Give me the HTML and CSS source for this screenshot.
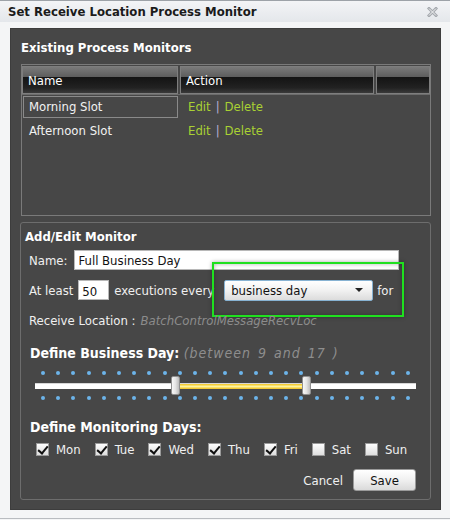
FILE: index.html
```html
<!DOCTYPE html>
<html lang="en">
<head>
  <meta charset="UTF-8">
  <title>Set Receive Location Process Monitor</title>
  <link rel="stylesheet" href="styles.css">
</head>
<body>
  <div class="window">
    <div class="titlebar">
      <span class="title">Set Receive Location Process Monitor</span>
      <svg class="close" width="11" height="10" viewBox="0 0 11 10">
        <path d="M2 1.5 L9 8.5 M9 1.5 L2 8.5" stroke="#a4a8ad" stroke-width="3" stroke-linecap="square"/>
        <path d="M2 1.5 L9 8.5 M9 1.5 L2 8.5" stroke="#f4f5f6" stroke-width="1"/>
      </svg>
    </div>

    <div class="panel">
      <h2 class="section-title">Existing Process Monitors</h2>

      <div class="grid">
        <div class="grid-head">
          <div class="hcell col-name">Name</div>
          <div class="hcell col-action">Action</div>
          <div class="hcell col-fill"></div>
        </div>
        <div class="grid-row selected">
          <div class="cell col-name">Morning Slot</div>
          <div class="cell col-action"><a class="link">Edit</a><span class="sep">|</span><a class="link">Delete</a></div>
        </div>
        <div class="grid-row">
          <div class="cell col-name">Afternoon Slot</div>
          <div class="cell col-action"><a class="link">Edit</a><span class="sep">|</span><a class="link">Delete</a></div>
        </div>
      </div>

      <div class="editor">
        <h3 class="editor-title">Add/Edit Monitor</h3>

        <div class="row">
          <label class="lbl">Name:</label>
          <div class="textbox name-box">Full Business Day</div>
        </div>

        <div class="row">
          <span class="lbl">At least</span>
          <div class="textbox count-box">50</div>
          <span class="lbl">executions every</span>
          <div class="combo">
            <span>business day</span>
            <span class="caret"></span>
          </div>
          <span class="lbl">for</span>
          <div class="focus-ring"></div>
        </div>

        <div class="row">
          <span class="lbl">Receive Location :</span>
          <span class="muted">BatchControlMessageRecvLoc</span>
        </div>

        <h3 class="block-title business">Define Business Day: <span class="hint">(between 9 and 17 )</span></h3>

        <div class="slider">
          <div class="ticks">
            <i></i><i></i><i></i><i></i><i></i><i></i><i></i><i></i><i></i><i></i><i></i><i></i><i></i>
            <i></i><i></i><i></i><i></i><i></i><i></i><i></i><i></i><i></i><i></i><i></i><i></i>
          </div>
          <div class="track">
            <div class="range"></div>
            <div class="thumb thumb-low"></div>
            <div class="thumb thumb-high"></div>
          </div>
          <div class="ticks">
            <i></i><i></i><i></i><i></i><i></i><i></i><i></i><i></i><i></i><i></i><i></i><i></i><i></i>
            <i></i><i></i><i></i><i></i><i></i><i></i><i></i><i></i><i></i><i></i><i></i><i></i>
          </div>
        </div>

        <h3 class="block-title monitoring">Define Monitoring Days:</h3>

        <div class="days">
          <label class="day"><span class="check on"></span>Mon</label>
          <label class="day"><span class="check on"></span>Tue</label>
          <label class="day"><span class="check on"></span>Wed</label>
          <label class="day"><span class="check on"></span>Thu</label>
          <label class="day"><span class="check on"></span>Fri</label>
          <label class="day"><span class="check"></span>Sat</label>
          <label class="day"><span class="check"></span>Sun</label>
        </div>

        <div class="actions">
          <a class="cancel">Cancel</a>
          <button type="button" class="save">Save</button>
        </div>
      </div>
    </div>
  </div>
</body>
</html>
```

FILE: styles.css
```css
* {
  box-sizing: border-box;
}

body {
  margin: 0;
  background: #f4f5f6;
  font-family: "DejaVu Sans", sans-serif;
  font-stretch: condensed;
  font-size: 13px;
  color: #f2f2f2;
}

.window {
  width: 450px;
  height: 519px;
  border-top: 1px solid #9da2a8;
  border-bottom: 1px solid #b9bcc0;
  background: #f4f5f6;
}

.titlebar {
  height: 21px;
  display: flex;
  align-items: center;
  justify-content: space-between;
  padding: 0 12px 0 8px;
  background: linear-gradient(to bottom, #f3f4f6, #e4e7eb);
}

.title {
  font-weight: bold;
  font-size: 13px;
  color: #1b1b1b;
}

.close {
  display: block;
}

/* dark content area */
.panel {
  margin: 6px 9px 0 10px;
  height: 482px;
  padding: 11px 9px 0 10px;
  background: #474747;
  border: 1px solid #3d3d3d;
}

.section-title {
  margin: 0 0 8px 0;
  font-size: 13px;
  line-height: 16px;
  font-weight: bold;
  color: #fff;
}

/* grid of existing monitors */
.grid {
  height: 152px;
  border: 1px solid #7a7a7a;
}

.grid-head {
  display: flex;
  gap: 2px;
  padding: 1px 0 0 0;
  border-bottom: 1px solid #6c6c6c;
}

.hcell {
  height: 28px;
  padding: 7px 0 0 5px;
  border: 1px solid #7e7e7e;
  background: linear-gradient(to bottom, #7a7a7a 0%, #5d5d5d 38%, #141414 40%, #222 80%, #3a3a3a 100%);
  color: #fff;
  font-size: 13px;
  line-height: 14px;
}

.col-name {
  width: 156px;
}

.col-action {
  width: 194px;
}

.col-fill {
  flex: 1;
}

.grid-row {
  display: flex;
  gap: 2px;
  margin-top: 1px;
}

.cell {
  height: 22px;
  line-height: 20px;
  padding-left: 5px;
  border: 1px solid transparent;
}

.grid-row .col-name {
  margin-left: 1px;
  width: 155px;
}

.grid-row.selected .col-name {
  border-color: #8a8a8a;
}

.grid-row + .grid-row {
  margin-top: 2px;
}

.col-action.cell {
  padding-left: 7px;
}

.link {
  color: #a9d133;
}

.sep {
  color: #b8b0d6;
  margin: 0 5px;
}

/* add / edit group box */
.editor {
  margin: 6px 0 0 -1px;
  height: 278px;
  padding: 6px 14px 0 4px;
  border: 1px solid #6d6d6d;
  border-radius: 3px;
}

.editor-title {
  margin: 0 0 5px 0;
  font-size: 13px;
  line-height: 16px;
  font-weight: bold;
  color: #fff;
}

.row {
  position: relative;
  display: flex;
  align-items: center;
  gap: 5px;
  height: 20px;
  margin: 0 0 10px 4px;
}

.lbl {
  color: #f0f0f0;
}

.textbox {
  height: 20px;
  background: #fff;
  border: 1px solid #b8b8b8;
  color: #111;
  padding: 2px 0 0 3px;
  line-height: 16px;
  overflow: hidden;
}

.name-box {
  width: 325px;
  padding-top: 2px;
  margin-left: 2px;
}

.count-box {
  width: 31px;
  padding-top: 3px;
}

.combo {
  display: flex;
  align-items: center;
  justify-content: space-between;
  width: 149px;
  height: 21px;
  margin: 0 -1px 0 5px;
  padding: 0 9px 0 6px;
  border: 1px solid #87b2d2;
  border-radius: 2px;
  background: linear-gradient(to bottom, #ffffff, #f1f1f1 50%, #dcdcdc);
  color: #111;
}

.caret {
  width: 0;
  height: 0;
  border-left: 4px solid transparent;
  border-right: 4px solid transparent;
  border-top: 4px solid #222;
}

.focus-ring {
  position: absolute;
  left: 183px;
  top: -18px;
  width: 192px;
  height: 55px;
  border: 2px solid #1fe01f;
  box-shadow: 0 0 4px rgba(0, 0, 0, 0.35), inset 0 0 4px rgba(0, 0, 0, 0.3);
  pointer-events: none;
}

.muted {
  color: #8c8c8c;
  font-style: italic;
}

.block-title {
  margin: 0 0 0 5px;
  font-size: 14px;
  line-height: 16px;
  font-weight: bold;
  color: #fff;
}

.business {
  margin-top: 15px;
}

.monitoring {
  margin-top: 19px;
}

.hint {
  font-weight: normal;
  font-style: italic;
  color: #8e8e8e;
  letter-spacing: 1px;
  word-spacing: 2px;
}

/* business-day range slider */
.slider {
  width: 381px;
  margin: 10px 0 0 10px;
}

.ticks {
  display: flex;
  justify-content: space-between;
  padding: 0 6px;
}

.ticks i {
  width: 4px;
  height: 4px;
  border-radius: 50%;
  background: #6cb4ea;
}

.track {
  position: relative;
  height: 6px;
  margin: 8px 0 7px 0;
  background: #fff;
  border-top: 1px solid #d6d6d6;
}

.range {
  position: absolute;
  left: 144px;
  top: 0;
  width: 123px;
  height: 5px;
  background: linear-gradient(to bottom, #f2c21a, #fff4a0 50%, #f0be16);
}

.thumb {
  position: absolute;
  top: -8px;
  width: 9px;
  height: 19px;
  border: 1px solid #8f8f8f;
  border-radius: 2px;
  background: linear-gradient(to right, #f7f7f7, #e4e4e4 50%, #bdbdbd);
}

.thumb-low {
  left: 136px;
}

.thumb-high {
  left: 267px;
}

.days {
  display: flex;
  align-items: center;
  gap: 14px;
  margin: 7px 0 0 11px;
}

.day {
  display: flex;
  align-items: center;
  gap: 7px;
  color: #f0f0f0;
}

.check {
  position: relative;
  width: 13px;
  height: 13px;
  border: 1px solid #9a9a9a;
  background: linear-gradient(to bottom, #fdfdfd, #dedede);
}

.check.on::after {
  content: "";
  position: absolute;
  left: 3px;
  top: 0;
  width: 4px;
  height: 8px;
  border-right: 2px solid #111;
  border-bottom: 2px solid #111;
  transform: rotate(40deg);
}

.actions {
  display: flex;
  align-items: center;
  justify-content: flex-end;
  gap: 10px;
  margin-top: 12px;
}

.cancel {
  color: #f0f0f0;
}

.save {
  width: 63px;
  height: 22px;
  font-family: inherit;
  font-stretch: condensed;
  font-size: 13px;
  color: #111;
  border: 1px solid #9a9a9a;
  border-radius: 3px;
  background: linear-gradient(to bottom, #ffffff, #f0f0f0 50%, #dadada);
}
```
